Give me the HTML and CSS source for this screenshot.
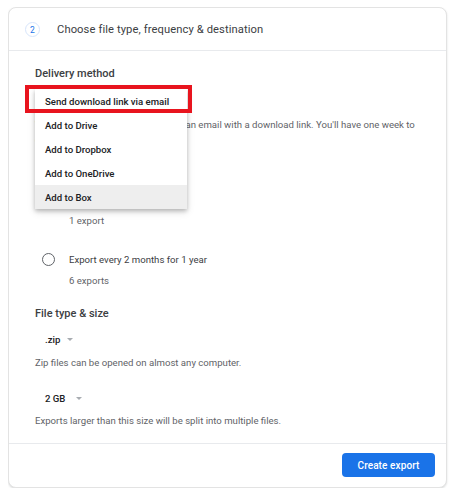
FILE: index.html
```html
<!DOCTYPE html>
<html>
<head>
<meta charset="utf-8">
<link rel="stylesheet" href="styles.css">
</head>
<body>
<div class="card">
  <div class="card-header">
    <span class="step">2</span>
    <span class="title">Choose file type, frequency &amp; destination</span>
  </div>
  <div class="card-body">
    <div class="delivery">
      <div class="heading">Delivery method</div>
      <div class="select select-first"><span>Send download link via email</span><span class="arrow"></span></div>
      <p class="desc desc-wide">When your files are ready, you'll get an email with a download link. You'll have one week to download your files.</p>
      <div class="menu">
        <div class="menu-item">Send download link via email</div>
        <div class="menu-item">Add to Drive</div>
        <div class="menu-item">Add to Dropbox</div>
        <div class="menu-item">Add to OneDrive</div>
        <div class="menu-item active">Add to Box</div>
      </div>
      <div class="highlight"></div>
    </div>
    <div class="heading freq">Frequency</div>
    <div class="radio-row r1"><span class="radio"></span><span>Export once</span></div>
    <div class="sub">1 export</div>
    <div class="radio-row r2"><span class="radio"></span><span>Export every 2 months for 1 year</span></div>
    <div class="sub">6 exports</div>
    <div class="heading ftype">File type &amp; size</div>
    <div class="select s-zip"><span>.zip</span><span class="arrow"></span></div>
    <p class="desc d-zip">Zip files can be opened on almost any computer.</p>
    <div class="select s-gb"><span>2 GB</span><span class="arrow a-gb"></span></div>
    <p class="desc d-gb">Exports larger than this size will be split into multiple files.</p>
  </div>
  <div class="card-footer">
    <button class="btn">Create export</button>
  </div>
</div>
</body>
</html>
```

FILE: styles.css
```css
* { box-sizing: border-box; }
html, body { background: #ffffff; }
body {
  margin: 7px 0 0 8px;
  font-family: Roboto, "Liberation Sans", Arial, sans-serif;
  color: #3c4043;
}
.card {
  width: 439px;
  border: 1px solid #e3e3e3;
  border-radius: 8px;
  box-shadow: 0 1px 2px rgba(60,64,67,0.18);
  background: #fff;
}
.card-header {
  height: 43px;
  display: flex;
  align-items: center;
  padding-left: 16px;
  border-bottom: 1px solid #e8eaed;
}
.step {
  width: 15px;
  height: 15px;
  border-radius: 50%;
  border: 1px solid #d7e5fb;
  color: #1a73e8;
  font-size: 8.5px;
  display: flex;
  align-items: center;
  justify-content: center;
  margin-top: 1px;
}
.title {
  margin-left: 17px;
  font-size: 11.2px;
  color: #3c4043;
  letter-spacing: 0.1px;
}
.card-body {
  padding: 15px 26px 15px 26px;
}
.delivery { position: relative; }
.heading {
  font-size: 11px;
  font-weight: 500;
  line-height: 16px;
  color: #3c4043;
}
.select {
  display: flex;
  align-items: center;
  height: 20px;
  padding-left: 10px;
  font-size: 9.6px;
  font-weight: 500;
  color: #202124;
}
.select-first { height: 24px; margin-top: 6px; }
.arrow {
  width: 0; height: 0;
  border-left: 3.5px solid transparent;
  border-right: 3.5px solid transparent;
  border-top: 3.5px solid #a8acb1;
  margin-left: 7px;
}
.a-gb { margin-left: 11px; }
.desc {
  margin: 0;
  font-size: 9.6px;
  line-height: 14px;
  color: #5f6368;
}
.desc-wide { margin-top: 5px; margin-right: -6px; line-height: 15px; }
.menu {
  position: absolute;
  left: 0;
  top: 23px;
  width: 152px;
  background: #fff;
  box-shadow: 0 2px 4px rgba(0,0,0,0.22), 0 3px 8px rgba(0,0,0,0.12);
}
.menu-item {
  height: 24px;
  display: flex;
  align-items: center;
  padding-left: 10px;
  font-size: 9.6px;
  font-weight: 500;
  color: #202124;
}
.menu-item.active { background: #eeeeee; }
.highlight {
  position: absolute;
  left: -10px;
  top: 19px;
  width: 167px;
  height: 28px;
  border: 4px solid #e8141e;
}
.freq { margin-top: 16px; }
.radio-row {
  display: flex;
  align-items: center;
  height: 20px;
  font-size: 9.6px;
  color: #3c4043;
}
.r1 { margin-top: 10px; }
.r2 { margin-top: 21px; }
.radio {
  width: 13px;
  height: 13px;
  border-radius: 50%;
  border: 1.6px solid #5f6368;
  margin-left: 7px;
  margin-right: 14px;
}
.sub {
  margin-top: 5px;
  padding-left: 34px;
  font-size: 9.6px;
  line-height: 14px;
  color: #5f6368;
}
.ftype { margin-top: 18px; }
.s-zip { margin-top: 7px; }
.d-zip { margin-top: 7px; }
.s-gb { margin-top: 18px; }
.d-gb { margin-top: 6px; }
.card-footer {
  border-top: 1px solid #e8eaed;
  display: flex;
  justify-content: flex-end;
  padding: 9px 11px 10px 0;
}
.btn {
  width: 93px;
  height: 24px;
  border: none;
  border-radius: 4px;
  background: #1a73e8;
  color: #fff;
  font-family: Roboto, "Liberation Sans", Arial, sans-serif;
  font-size: 10px;
  font-weight: 500;
  letter-spacing: 0.1px;
}
```
